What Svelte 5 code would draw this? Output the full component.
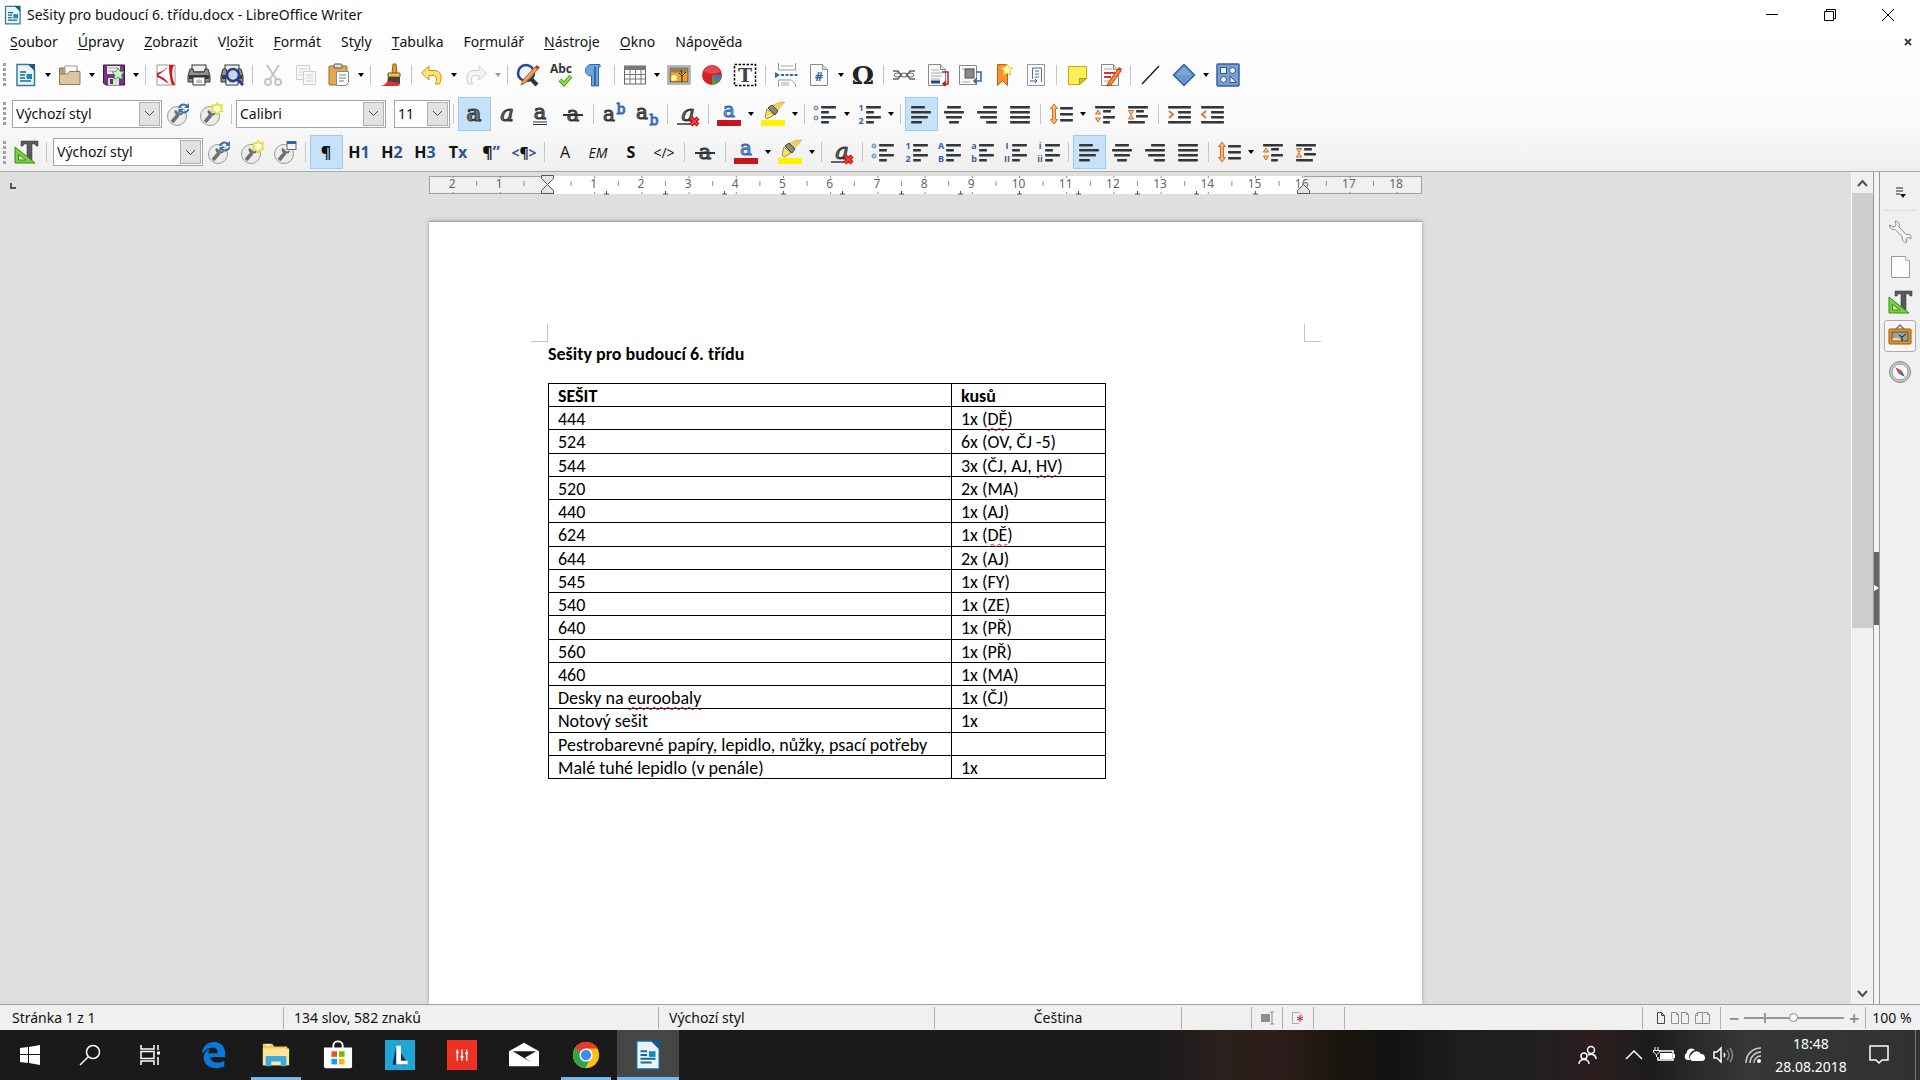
<script>
  const menus = [
    ['', 'S', 'oubor'], ['', 'Ú', 'pravy'], ['', 'Z', 'obrazit'], ['V', 'l', 'ožit'], ['', 'F', 'ormát'],
    ['St', 'y', 'ly'], ['', 'T', 'abulka'], ['Fo', 'r', 'mulář'], ['', 'N', 'ástroje'], ['', 'O', 'kno'], ['Nápo', 'v', 'ěda']
  ];

  const bar = (x, y, w) => `<rect x="${x}" y="${y - 1}" width="${w}" height="3" rx="1" fill="#8d8f8f"/><rect x="${x}" y="${y - 1}" width="${w}" height="2" rx="1" fill="#33363a"/>`;
  const bars = (list) => list.map(([x, y, w]) => bar(x, y, w)).join('');
  const listIcon = (a, b) => `<g font-family="Open Sans,sans-serif" font-weight="700" font-size="9" fill="#3a62a0" text-anchor="middle"><text x="4" y="9">${a}</text><text x="4" y="22">${b}</text></g>` + bars([[9, 5, 15], [9, 10, 8], [9, 15, 15], [9, 20, 8]]);
  const glyph = (t, extra = '', x = 12, size = 23, y = 19) => `<text x="${x}" y="${y}" text-anchor="middle" font-family="DejaVu Serif,serif" font-size="${size}" fill="#6d7070" stroke="#2e3436" stroke-width="1" ${extra}>${t}</text>`;
  const label = (t, extra = '', size = 16) => `<text x="12" y="18" text-anchor="middle" font-family="Open Sans,sans-serif" font-size="${size}" fill="#111" ${extra}>${t}</text>`;
  const blue = (t) => `<tspan fill="#2f5597">${t}</tspan>`;
  const disc = '<circle cx="11" cy="14" r="9.500" fill="#ececea" stroke="#9b9b98"/><path d="M6 20l6-7" stroke="#6b7073" stroke-width="3.500"/><path d="M9 8c-1.500 3 1 6 5 5.500 2 0 3-2 3-3l-3.500 1L11 9z" fill="#6b7073"/>';
  const star = '<path d="M18 1l1.500 2.500 3.500-.5-1 3.500 1.500 2.500-3.500 1-2 2.500-2-2.500-3.500-1 1.500-2.500-.5-3.500 3 .5z" fill="#fffde0" stroke="#ecd92e" stroke-width="1.500"/>';
  const page = '<path d="M3.500 1.500h12l5 5v16h-17z" fill="#fbfbfb" stroke="#888a85"/><path d="M15.500 1.500v5h5" fill="#ddd" stroke="#888a85"/>';
  const writer = '<path d="M3 1.500h12l5.500 5.500v15.500h-17.500z" fill="#e9f5fb" stroke="#3d7896" stroke-width="1.500"/><path d="M14 1h7v7z" fill="#18597f"/><path d="M6 9h6M6 12h5M6 15h5M6 18h11" stroke="#1b6a96" stroke-width="1.500"/><rect x="12.500" y="11" width="5.500" height="5" fill="#1b86b9"/>';
  const redX = '<path d="M15 16l7 7m0-7l-7 7" stroke="#a40000" stroke-width="4"/><path d="M15 16l7 7m0-7l-7 7" stroke="#ff3a3a" stroke-width="2"/>';
  const printer = '<rect x="5" y="2" width="14" height="7" fill="#eee" stroke="#333"/><path d="M3 6h3l1 3h10l1-3h3l2 7v6H1v-6z" fill="#8f9290" stroke="#2e3436"/><path d="M2 12h20v4H2z" fill="#3a3d3e"/><path d="M6 14h12v8H6z" fill="#fafafa" stroke="#333"/><path d="M9 18l3-2 3 2v2H9z" fill="#a6d3a0"/>';
  const pencil = '<path d="M10 20L20 6l3 2-10 14-4 1z" fill="#f58a2d" stroke="#b8480c"/><path d="M20 6l1-2 3 2-1 2z" fill="#d33"/>';
  const orangeArrow = '<path d="M5 2l3.500 4.500H6.500v11h2L5 22l-3.500-4.500h2v-11h-2z" fill="#f7b878" stroke="#d06f25"/>';
  const ruleT = '<path d="M7 1h17v5h-2l-1-2h-3v17h-5V4H10L9 6H7z" fill="#565b5e" stroke="#333" stroke-width=".5"/><path d="M1 7l20 16H1z" fill="#7ccf45" stroke="#3c8a0c"/><path d="M4.500 14.500l7.500 5.500H4.500z" fill="#d6f5bf" stroke="#3c8a0c"/>';
  const picture = '<rect x="1" y="3" width="22" height="18" fill="#f4f4f2" stroke="#777"/><rect x="3" y="5" width="18" height="14" fill="#f0a42b" stroke="#444"/><path d="M3.500 5.500h17v4h-17z" fill="#93805d"/><circle cx="7" cy="15" r="3" fill="#fff2a0"/><path d="M15 19v-6l-3-3m3 3l4-4m-4 2l-1-4" stroke="#2b1a0a" fill="none"/>';

  const icons = {
    writer,
    new: writer,
    open: '<path d="M1.500 5h7l2 2h9v14h-18z" fill="#b99e75" stroke="#8b6f45"/><path d="M7 3h12v14H7z" fill="#fafafa" stroke="#999"/><path d="M1.500 11h8l2-2.500h10.500v13h-20.500z" fill="#dcc7a3" stroke="#967b50"/>',
    save: '<path d="M1.500 2h21v20h-19l-2-2z" fill="#763485" stroke="#3e1448"/><rect x="5" y="3" width="13" height="8" fill="#f1e9f3"/><path d="M6 5h10M6 8h6" stroke="#aaa"/><rect x="6" y="15" width="11" height="7" fill="#ddd"/><rect x="8" y="16" width="3" height="5" fill="#444"/><path d="M16 5l2 3.500 4 .5-2.500 3 1 4-4.500-1.500-4 1.500 1-4-3-3 4-.5z" fill="#d2f2ce" stroke="#48a860"/>',
    pdf: '<path d="M3 2h18v20H3z" fill="#fff" stroke="#999"/><path d="M15 2h5c-3 5-2 14 1 20h-3c-2-5-3-13-3-20zM14 3c-1 3-5 6-10 9 5 2 9 5 11 9-3-2-8-6-12-7v-4c4-1 8-3 11-7z" fill="#d0151c"/>',
    print: printer,
    preview: printer + '<circle cx="13" cy="12" r="6" fill="#cfe4f8" fill-opacity=".9" stroke="#2a3f91" stroke-width="2.500"/><path d="M17 16l6 6" stroke="#2a3f91" stroke-width="3"/>',
    cut: '<g fill="none" stroke="#c4c6c6" stroke-width="2"><path d="M6 2l9 14M18 2L9 16"/><circle cx="7" cy="19" r="3"/><circle cx="17" cy="19" r="3"/></g>',
    copy: '<g fill="#f8f8f8" stroke="#cfcfcf"><path d="M2.500 2.500h13v14h-13z"/><path d="M5 6h8M5 9h8M5 12h5"/><path d="M9.500 8.500h12v13h-12z"/><path d="M12 12h7M12 15h7M12 18h7"/></g>',
    paste: '<rect x="2" y="3" width="18" height="19" rx="1" fill="#dfa955" stroke="#9d6c20"/><rect x="7" y="1" width="8" height="4" rx="1" fill="#ddd" stroke="#555"/><path d="M9.500 8.500h12v11l-3 3h-9z" fill="#fff" stroke="#888"/><path d="M12 12h7M12 15h7M12 18h5" stroke="#777"/>',
    brush: '<path d="M14 1h3l1 9h-5z" fill="#e8963c" stroke="#a55a10"/><path d="M9 10h12v4H9z" fill="#f0c050" stroke="#80591a"/><path d="M9 14h12v7H8z" fill="#4b4038"/><path d="M1 23c5 0 6-4 9-5l11 2c0 2-1 3-3 3z" fill="#d9333c"/>',
    undo: '<path d="M9 3v4.500h5c7 0 9 6 5.500 13.500h-4c2-5 1-8.500-2.500-8.500H9V17l-7.500-7z" fill="#fbe27b" stroke="#c5980a"/>',
    redo: '<path d="M15 3v4.500h-5c-7 0-9 6-5.500 13.500h4c-2-5-1-8.500 2.500-8.500h4V17l7.500-7z" fill="#f4f4f4" stroke="#d0d0d0"/>',
    find: '<circle cx="10" cy="10" r="8" fill="#e6f2fc" stroke="#24448f" stroke-width="2.500"/><path d="M15 16l6 6" stroke="#333" stroke-width="4"/><path d="M5 22l2-5L19 4l3 2L9 20z" fill="#f3a24b" stroke="#b35b12"/><path d="M19 4l2-2 3 3-2 1z" fill="#d22"/>',
    spell: '<text x="12" y="10" text-anchor="middle" font-family="Open Sans,sans-serif" font-weight="700" font-size="12" fill="#333">Abc</text><path d="M11 17l4 4 7-8" fill="none" stroke="#4c9a1d" stroke-width="4"/><path d="M11 17l4 4 7-8" fill="none" stroke="#8fe04e" stroke-width="2"/>',
    marks: '<path d="M18 1.500v2.500h-1.500v19h-3V4h-1v19h-3V13C1 13 2 2 9 1.500z" fill="#6aa5dc" stroke="#2d6ba8"/>',
    table: '<rect x="1.500" y="3" width="21" height="18" fill="#fff" stroke="#666"/><path d="M1 3h22v4H1z" fill="#777"/><path d="M2 11.500h20M2 16h20M7 7v14M12.500 7v14M18 7v14" stroke="#777" fill="none"/>',
    image: picture,
    chart: '<circle cx="12" cy="12" r="10" fill="#d5202a"/><path d="M12 12V22a10 10 0 0 0 7-3z" fill="#59983a"/><path d="M12 12l7 7a10 10 0 0 0 3-7z" fill="#4477bd"/><path d="M4 8a9 9 0 0 1 16 0 10 7 0 0 1-16 0z" fill="#fff" opacity=".2"/>',
    textbox: '<rect x="1.500" y="1.500" width="21" height="21" fill="#fff" stroke="#000" stroke-width="1.500" stroke-dasharray="2.500 1.500"/><text x="12" y="19" text-anchor="middle" font-family="DejaVu Serif,serif" font-weight="700" font-size="19" fill="#444">T</text>',
    pagebreak: '<path d="M4.500 0v7h17V0M4.500 24v-7h13l4 4v3" fill="#fff" stroke="#999"/><path d="M7 3h12M7 20h8M7 22h8" stroke="#aaa"/><path d="M1 9l5 3-5 3z" fill="#3465a4"/><path d="M7 12h17" stroke="#3465a4" stroke-width="2" stroke-dasharray="3 1.500"/>',
    field: page + '<text x="12" y="18" text-anchor="middle" font-family="Open Sans,sans-serif" font-weight="700" font-size="13" fill="#3465a4">#</text>',
    omega: '<text x="12" y="21" text-anchor="middle" font-family="DejaVu Serif,serif" font-weight="700" font-size="25" fill="#222">Ω</text>',
    link: '<g fill="none" stroke="#666"><path d="M1 8h5l3 4-3 4H1M23 8h-5l-3 4 3 4h5" stroke-width="1.500"/><ellipse cx="6" cy="12" rx="4" ry="2"/><ellipse cx="12" cy="12" rx="4" ry="2"/><ellipse cx="18" cy="12" rx="4" ry="2"/></g>',
    footnote: page + '<path d="M6 7h8M6 10h11M6 13h11M6 16h9" stroke="#aaa"/><path d="M6 19h9" stroke="#27467f" stroke-width="3"/><path d="M17 9h6v12h-4m2-3l-3 3 3 2" fill="none" stroke="#c01822" stroke-width="1.500"/>',
    endnote: '<path d="M1.500 2.500h17v19h-17z" fill="#fafafa" stroke="#888"/><path d="M4 6h12M4 19h8" stroke="#aaa"/><rect x="7" y="6" width="9" height="9" fill="#888" stroke="#555"/><path d="M18 9h5v9h-7m3-3l-3 3 3 3" fill="none" stroke="#3465a4" stroke-width="1.500"/>',
    bookmark: '<path d="M6.500 1.500h10v21l-5-5-5 5z" fill="#f5922c" stroke="#c3600c"/><path d="M16 1l2 3.500 4 .5-3 3 .5 4-3.500-2-3.500 2 .5-4-3-3 4-.5z" fill="#fff8b0" stroke="#e8ca20"/>',
    crossref: '<path d="M3.500 1.500h17v21h-17z" fill="#fafafa" stroke="#999"/><path d="M8.500 5h9v14M8.500 5v11M11 8h4M11 11h4M11 14h4" stroke="#4a73ab" fill="none"/><path d="M6 18h7m-2-2l2 2-2 2" stroke="#3465a4" fill="none"/>',
    note: '<path d="M3.500 3.500h18v12l-7 6h-11z" fill="#fcef58" stroke="#c8ab12"/><path d="M14.500 21.500v-6h7z" fill="#e1bd1f" stroke="#b89a10"/>',
    track: page + '<path d="M6 6h8M6 18h6" stroke="#aaa"/><path d="M6 10h11M6 14h7" stroke="#cc3b3b" stroke-width="2"/>' + pencil,
    line: '<path d="M3 21L20 3" stroke="#222" stroke-width="1.500"/>',
    diamond: '<path d="M12 1.500L22.500 12 12 22.500 1.500 12z" fill="#6796d2" stroke="#32619f" stroke-width="1.500"/><path d="M12 4l8 8H4z" fill="#fff" opacity=".15"/>',
    shapes: '<rect x="1" y="1" width="22" height="22" rx="1" fill="#779fd4" stroke="#365f9c" stroke-width="1.500"/><g fill="#e8f0fa" stroke="#2f5590"><path d="M4.500 4.500h6v6h-6z"/><circle cx="16.500" cy="7.500" r="3"/><circle cx="7.500" cy="16.500" r="3"/><path d="M14 13v6.500h6.500z"/></g>',
    refresh: disc + '<g fill="none" stroke="#3a6cb4" stroke-width="2"><path d="M13 6c1-3.500 5-4.500 8-2M22.500 7c-1 3.500-5 4.500-8 2"/></g><path d="M23 1v5h-5zM12.500 12V7h5z" fill="#3a6cb4"/>',
    newstyle: disc + star,
    stylewin: disc + '<rect x="14" y="1.500" width="9" height="8" fill="#f4f4f4" stroke="#667"/><path d="M14 2.500h9" stroke="#2f63ae" stroke-width="3"/>',
    bold: glyph('a', 'font-weight="700"'),
    italic: glyph('a', 'font-style="italic"'),
    underline: glyph('a', '', 12, 21, 17) + '<path d="M5 20h14M5 22.500h14" stroke="#2e3436"/>',
    strike: glyph('a', '', 12, 21) + '<path d="M2 13h20" stroke="#2e3436" stroke-width="2"/>',
    sup: glyph('a', '', 7, 20) + '<text x="19" y="12" text-anchor="middle" font-family="DejaVu Serif,serif" font-size="14" fill="#8ab4e6" stroke="#2f63ae">b</text>',
    sub: glyph('a', '', 7, 20, 17) + '<text x="19" y="23" text-anchor="middle" font-family="DejaVu Serif,serif" font-size="14" fill="#8ab4e6" stroke="#2f63ae">b</text>',
    clear: glyph('a', 'font-style="italic"') + '<path d="M1 22h14" stroke="#2e3436" stroke-width="1.500"/>' + redX,
    fontcolor: '<text x="12" y="15" text-anchor="middle" font-family="DejaVu Serif,serif" font-size="20" fill="#8ab4e6" stroke="#2f63ae">a</text><rect y="18" width="24" height="6" fill="#c9141c"/>',
    highlight: '<rect y="18" width="24" height="6" fill="#fff200"/><path d="M4 15l2-8 7 6-7 4z" fill="#f7e16a" stroke="#a88a1c"/><path d="M7 6l4-3 6 6-3 4z" fill="#8c8c78" stroke="#444"/><path d="M12 3l7-3h5l-7 8z" fill="#ecd25a" stroke="#b8a040" stroke-width=".5"/>',
    bullets: '<g fill="#b5d0f0" stroke="#5b86bd"><circle cx="3" cy="6" r="2"/><circle cx="3" cy="16" r="2"/></g>' + bars([[8, 5, 15], [8, 10, 8], [8, 15, 15], [8, 20, 8]]),
    n12: listIcon('1', '2'), nAB: listIcon('A', 'B'), nab: listIcon('a', 'b'), nI: listIcon('I', 'II'), ni: listIcon('i', 'ii'),
    left: bars([[2, 5, 14], [2, 10, 20], [2, 15, 17], [2, 20, 11]]),
    center: bars([[5, 5, 14], [2, 10, 20], [4, 15, 16], [7, 20, 10]]),
    right: bars([[8, 5, 14], [2, 10, 20], [5, 15, 17], [11, 20, 11]]),
    justify: bars([[2, 5, 20], [2, 10, 20], [2, 15, 20], [2, 20, 20]]),
    spacing: orangeArrow + bars([[11, 6, 13], [11, 12, 13], [11, 18, 13]]),
    more: bars([[2, 5, 20], [10, 9, 8], [10, 15, 12], [10, 20, 7]]) + '<path d="M5 8l2.500 4h-5zM5 20l2.500-4h-5z" fill="#fbd0a0" stroke="#d4691a"/>',
    less: bars([[2, 5, 20], [10, 9, 8], [10, 14, 12], [2, 20, 17]]) + '<path d="M5 12.500l2.500-4h-5zM5 13l2.500 4h-5z" fill="#fbd0a0" stroke="#d4691a"/>',
    indent: bars([[1, 5, 23], [11, 10, 13], [11, 15, 13], [1, 20, 23]]) + '<path d="M2 9l4 3.500L2 16" stroke="#d98038" stroke-width="2" fill="none"/>',
    outdent: bars([[1, 5, 23], [11, 10, 13], [11, 15, 13], [1, 20, 23]]) + '<path d="M6 9l-4 3.500L6 16" stroke="#d98038" stroke-width="2" fill="none"/>',
    ruleT,
    para: label('¶', 'font-weight="700"'),
    h1: label('H' + blue('1'), 'font-weight="700"'),
    h2: label('H' + blue('2'), 'font-weight="700"'),
    h3: label('H' + blue('3'), 'font-weight="700"'),
    tx: label('T' + blue('x'), 'font-weight="700"'),
    quote: label('¶' + blue('”'), 'font-weight="700"'),
    pre: label(blue('&lt;') + '¶' + blue('&gt;'), 'font-weight="700"', 14),
    A: label('A'),
    em: label('EM', 'font-style="italic"', 14),
    S: label('S', 'font-weight="700"'),
    code: label('&lt;/&gt;', '', 14),
    settings: '<path d="M8 8h7M8 11h7M8 14h4" stroke="#223"/><path d="M12 14h6l-3 4z" fill="#112"/>',
    wrench: '<path d="M1.500 5l4 2 2.500-1.500L7.500 1c3 0 4.500 3 3.500 6l7 7.500c3-1 5.500.5 5 4l-3-1-2 1.500.5 3.500c-3.500 0-5-3-4-5.500L7 9.500C4 10 1.500 8 1.500 5z" fill="#f4f4f4" stroke="#888"/>',
    blank: '<path d="M3.500 1.500h14l4 4v17h-18z" fill="#fcfcfc" stroke="#999"/><path d="M17.500 1.500v4h4" fill="#eee" stroke="#bbb"/>',
    gallery: '<path d="M8 5l4-4 4 4" fill="none" stroke="#777" stroke-width="1.500"/><rect x="1" y="5" width="22" height="15" rx="1" fill="#e8952a" stroke="#96540a"/><rect x="4" y="8" width="16" height="9" fill="#89a5b4" stroke="#7a4a10"/><path d="M4.500 16.500v-2l5-1 4 3z" fill="#fbd77a"/><path d="M14 17v-4l-3-2m3 2l4-3" stroke="#2b1a0a" fill="none"/>',
    compass: '<circle cx="12" cy="12" r="10.500" fill="#c7cbce" stroke="#888"/><circle cx="12" cy="12" r="8" fill="#f8f8f8" stroke="#999"/><path d="M7 7l7 4-3 3z" fill="#d83a3a"/><path d="M17 17l-6-3 3-3z" fill="#4c69a0"/>'
  };

  const A = { arrow: true }, G = { arrow: true, dim: true }, SEP = { sep: true };
  const b = (icon, title, on = false) => ({ icon, title, on });
  const combo = (title, value, small = false) => ({ combo: title, value, small });

  const aligns = [b('left', 'Zarovnat vlevo', true), b('center', 'Zarovnat na střed'), b('right', 'Zarovnat vpravo'), b('justify', 'Do bloku')];
  const toolbars = [
    [b('new', 'Nový'), A, b('open', 'Otevřít'), A, b('save', 'Uložit'), A, SEP, b('pdf', 'Exportovat do PDF'), b('print', 'Tisk'), b('preview', 'Náhled tisku'), SEP,
      b('cut', 'Vyjmout'), b('copy', 'Kopírovat'), b('paste', 'Vložit'), A, SEP, b('brush', 'Klonovat formátování'), SEP, b('undo', 'Zpět'), A, b('redo', 'Znovu'), G, SEP,
      b('find', 'Najít a nahradit'), b('spell', 'Pravopis'), b('marks', 'Formátovací značky'), SEP, b('table', 'Tabulka'), A, b('image', 'Obrázek'), b('chart', 'Graf'), b('textbox', 'Textové pole'), SEP,
      b('pagebreak', 'Konec stránky'), b('field', 'Pole'), A, b('omega', 'Speciální znak'), SEP, b('link', 'Odkaz'), b('footnote', 'Poznámka pod čarou'), b('endnote', 'Vysvětlivka'), b('bookmark', 'Záložka'), b('crossref', 'Křížový odkaz'), SEP,
      b('note', 'Komentář'), b('track', 'Sledovat změny'), SEP, b('line', 'Čára'), b('diamond', 'Základní tvary'), A, b('shapes', 'Funkce kreslení')],
    [combo('Styl odstavce', 'Výchozí styl'), b('refresh', 'Aktualizovat styl'), b('newstyle', 'Nový styl'), SEP, combo('Název písma', 'Calibri'), { gap: true }, combo('Velikost písma', '11', true), SEP,
      b('bold', 'Tučné', true), b('italic', 'Kurzíva'), b('underline', 'Podtržené'), b('strike', 'Přeškrtnuté'), SEP, b('sup', 'Horní index'), b('sub', 'Dolní index'), SEP, b('clear', 'Vymazat formátování'), SEP,
      b('fontcolor', 'Barva písma'), A, b('highlight', 'Zvýraznění'), A, SEP, b('bullets', 'Odrážky'), A, b('n12', 'Číslování'), A, SEP, ...aligns, SEP,
      b('spacing', 'Řádkování'), A, b('more', 'Zvětšit mezery'), b('less', 'Zmenšit mezery'), SEP, b('indent', 'Zvětšit odsazení'), b('outdent', 'Zmenšit odsazení')],
    [b('ruleT', 'Styly a formátování'), SEP, combo('Použít styl', 'Výchozí styl'), b('refresh', 'Aktualizovat styl'), b('newstyle', 'Nový styl'), b('stylewin', 'Upravit styl'), SEP,
      b('para', 'Výchozí odstavec', true), b('h1', 'Nadpis 1'), b('h2', 'Nadpis 2'), b('h3', 'Nadpis 3'), b('tx', 'Tělo textu'), b('quote', 'Citace'), b('pre', 'Předformátovaný text'), SEP,
      b('A', 'Výchozí znak'), b('em', 'Důraz'), b('S', 'Silný důraz'), b('code', 'Zdrojový text'), SEP, b('strike', 'Přeškrtnuté'), SEP, b('fontcolor', 'Barva písma'), A, b('highlight', 'Zvýraznění'), A, SEP, b('clear', 'Vymazat formátování'), SEP,
      b('bullets', 'Odrážky'), b('n12', 'Číslování 1 2'), b('nAB', 'Číslování A B'), b('nab', 'Číslování a b'), b('nI', 'Číslování I II'), b('ni', 'Číslování i ii'), SEP, ...aligns, SEP,
      b('spacing', 'Řádkování'), A, b('more', 'Zvětšit mezery'), b('less', 'Zmenšit mezery')]
  ];

  // Each cell is a list of text runs; a run in an array is marked by the spell checker.
  const rows = [
    [['444'], ['1x (', ['DĚ'], ')']],
    [['524'], ['6x (OV, ČJ -5)']],
    [['544'], ['3x (ČJ, AJ, ', ['HV'], ')']],
    [['520'], ['2x (MA)']],
    [['440'], ['1x (AJ)']],
    [['624'], ['1x (', ['DĚ'], ')']],
    [['644'], ['2x (AJ)']],
    [['545'], ['1x (FY)']],
    [['540'], ['1x (ZE)']],
    [['640'], ['1x (PŘ)']],
    [['560'], ['1x (PŘ)']],
    [['460'], ['1x (MA)']],
    [['Desky na ', ['euroobaly']], ['1x (ČJ)']],
    [['Notový sešit'], ['1x']],
    [['Pestrobarevné papíry, lepidlo, nůžky, psací potřeby'], []],
    [['Malé tuhé lepidlo (v penále)'], ['1x']]
  ];

  const cm = 47.2, zero = 118.5;
  const numbers = Array.from({ length: 21 }, (_, i) => i - 2).filter((n) => n !== 0);
  const halves = Array.from({ length: 20 }, (_, i) => i - 1.5);
  const tabs = Array.from({ length: 12 }, (_, i) => (i + 1) * 1.25);

  const side = [['settings', 'Nastavení postranní lišty'], ['wrench', 'Vlastnosti'], ['blank', 'Stránka'], ['ruleT', 'Styly a formátování'], ['gallery', 'Galerie'], ['compass', 'Navigátor']];

  const apps = [
    ['edge', 'Microsoft Edge', ''], ['explorer', 'Průzkumník souborů', 'multi'], ['store', 'Microsoft Store', ''], ['lapp', 'L', ''],
    ['mixer', 'Mixážní pult', ''], ['mail', 'Pošta', ''], ['chrome', 'Google Chrome', 'open'], ['writer', 'LibreOffice Writer', 'current']
  ];
  const appIcons = {
    edge: '<path d="M3 15C4 6 9 2 16 2c8 0 12 6 12 12v4H12c0 4 4 6 8 6 3 0 5-1 7-2v6c-2 1-5 2-9 2-8 0-13-5-13-11 0-5 3-8 7-10-1 1-2 3-2 5h10c0-4-2-6-5-6-5 0-9 3-12 7z" fill="#0a78d6"/>',
    explorer: '<path d="M2 4h10l2 3h14v20H2z" fill="#f3c84b"/><path d="M2 9h28v18H2z" fill="#fde69a"/><path d="M5 28V17h22v11h-6v-5H11v5z" fill="#3fa9e0"/><path d="M5 5h5" stroke="#fff" stroke-width="1.500"/>',
    store: '<path d="M11 9V6c0-6 10-6 10 0v3" fill="none" stroke="#fff" stroke-width="2"/><path d="M1 8h30v20a2 2 0 0 1-2 2H3a2 2 0 0 1-2-2z" fill="#fff"/><path d="M9 12h6v6H9z" fill="#f25022"/><path d="M17 12h6v6h-6z" fill="#7fba00"/><path d="M9 20h6v6H9z" fill="#00a4ef"/><path d="M17 20h6v6h-6z" fill="#ffb900"/>',
    lapp: '<rect x="0" y="0" width="32" height="32" fill="#1fa6d9"/><path d="M12 6L8 26l15 1v-4z" fill="#0b3550"/><path d="M12 6h5v16h7v4H12z" fill="#fff"/>',
    mixer: '<rect x="0" y="0" width="32" height="32" fill="#ee3124"/><path d="M11 10v12M16 10v12M21 10v12" stroke="#fff" stroke-width="1.500"/><path d="M9.500 13h3M14.500 18h3M19.500 14h3" stroke="#fff" stroke-width="2"/>',
    mail: '<path d="M0 12L16 3l16 9v16H0z" fill="#fff"/><path d="M4 12h25L17 19l7 5z" fill="#1a1a1a"/>',
    chrome: '<circle cx="16" cy="16" r="14" fill="#fbc116"/><path d="M16 16L4 9a14 14 0 0 1 24.500 0H16z" fill="#e33b2e"/><path d="M4 9a14 14 0 0 0 11 21l6-10.500-5-3.500z" fill="#31a350"/><circle cx="16" cy="16" r="7" fill="#fff"/><circle cx="16" cy="16" r="5.500" fill="#4688f1"/>',
    writer: '<path d="M4 1h16l8 8v22H4z" fill="#e9f5fb" stroke="#0f6a97" stroke-width="1.500"/><path d="M19 0h10v10z" fill="#18597f"/><path d="M8 12h7M8 16h7M8 20h16M8 24h12" stroke="#1b6a96" stroke-width="2"/><rect x="17" y="12" width="7" height="6" fill="#1b86b9"/>'
  };
  const tray = [
    ['chevron', 'Zobrazit skryté ikony', '<path d="M4 16l8-8 8 8" fill="none" stroke="#fff" stroke-width="1.500"/>'],
    ['battery', 'Baterie', '<path d="M8 8h13v9H6v-3" fill="none" stroke="#fff" stroke-width="1.500"/><rect x="8" y="10" width="12" height="6" fill="#fff"/><path d="M22 11v4" stroke="#fff" stroke-width="2"/><path d="M3 4v3M6 4v3M1.500 7.500h6V9l-3 3-3-3zM4.500 12v2" stroke="#fff" fill="none"/>'],
    ['cloud', 'OneDrive', '<path d="M8 17H5a4 4 0 0 1-.5-7A5 5 0 0 1 13 7c-4 1-5 4-6 6z" fill="#fff"/><path d="M10 18a4 4 0 0 1 0-7 5 5 0 0 1 9 0c3 0 4 2 4 4s-1 3-3 3z" fill="#fff"/>'],
    ['volume', 'Hlasitost', '<path d="M2 9h3l4-4v14l-4-4H2z" fill="none" stroke="#fff" stroke-width="1.500"/><path d="M12 10q1.500 2 0 4" stroke="#fff" fill="none" stroke-width="1.500"/><path d="M15 7q4 5 0 10M18 5q5 7 0 14" stroke="#888" fill="none" stroke-width="1.500"/>'],
    ['wifi', 'Wi-Fi', '<g fill="none" stroke="#ccc"><path d="M4 20C4 11 11 5 19 5M8 20c0-6 5-11 11-11M12 20c0-4 3-7 7-7" stroke-width="1.500"/></g><circle cx="17" cy="18" r="2" fill="#fff"/>']
  ];
</script>

{#snippet svg(body, size = 24)}
  <svg width={size} height={size} viewBox="0 0 {size} {size}" aria-hidden="true">{@html body}</svg>
{/snippet}

{#snippet cell(runs)}
  <td>{#each runs as run}{#if Array.isArray(run)}<span class="bad">{run[0]}</span>{:else}{run}{/if}{/each}</td>
{/snippet}

<div class="app">
  <header>
    <div class="title">
      {@render svg(icons.writer)}
      <h1>Sešity pro budoucí 6. třídu.docx - LibreOffice Writer</h1>
      <div class="controls">
        <button aria-label="Minimalizovat"><svg width="12" height="12"><path d="M0 5.500h12" /></svg></button>
        <button aria-label="Obnovit"><svg width="12" height="12"><path d="M.5 2.500h9v9h-9zM2.500 2.500v-2h9v9h-2" /></svg></button>
        <button aria-label="Zavřít"><svg width="12" height="12"><path d="M0 0l12 12M12 0L0 12" /></svg></button>
      </div>
    </div>
    <nav class="menu">
      {#each menus as [pre, key, post]}
        <button>{pre}<u>{key}</u>{post}</button>
      {/each}
      <button class="closedoc" aria-label="Zavřít dokument"><svg width="8" height="8"><path d="M1 1l6 6M7 1L1 7" /></svg></button>
    </nav>
    {#each toolbars as items}
      <div class="toolbar" role="toolbar">
        <span class="handle"></span>
        {#each items as it}
          {#if it.sep}<span class="sep"></span>
          {:else if it.gap}<span class="gap"></span>
          {:else if it.arrow}<button class="arrow" class:dim={it.dim} aria-label="Další možnosti"></button>
          {:else if it.combo}
            <label class="combo" class:small={it.small} class:flush={it.small || it.value === 'Calibri'}>
              <select aria-label={it.combo}><option>{it.value}</option></select>
              <span><svg width="11" height="7"><path d="M1 1l4.500 4.500L10 1" /></svg></span>
            </label>
          {:else}
            <button class="tool" class:on={it.on} title={it.title} aria-label={it.title}>{@render svg(icons[it.icon])}</button>
          {/if}
        {/each}
      </div>
    {/each}
  </header>

  <main>
    <section class="work">
      <div class="rulerrow">
        <button class="tabtype" aria-label="Typ tabulátoru"></button>
        <svg class="ruler" width="993" height="20" viewBox="0 0 993 20">
          <rect x=".5" y="1.500" width="992" height="17" fill="#f0f0f0" stroke="#a0a0a0" />
          <rect x="118" y="1" width="757" height="18" fill="#fff" />
          {#each halves as n}<path d="M{zero + n * cm} 6v5" stroke="#8a8a8a" />{/each}
          {#each numbers as n}
            <path d="M{zero + n * cm} 1v2M{zero + n * cm} 17v2" stroke="#8a8a8a" />
            <text x={zero - 1 + n * cm} y="13" text-anchor="middle">{Math.abs(n)}</text>
          {/each}
          {#each tabs as n}<path d="M{zero + n * cm} 16v3m-2.500 0h5" stroke="#555" />{/each}
          <path d="M112.500.5h12v3l-6 6 6 6v3h-12v-3l6-6-6-6z" fill="#e4e4e4" stroke="#555" />
          <path d="M868.500 18.500v-3l6-6 6 6v3z" fill="#e4e4e4" stroke="#555" />
        </svg>
      </div>
      <article>
        <div class="corners"><span class="tl"></span><span class="tr"></span></div>
        <h2>Sešity pro budoucí 6. třídu</h2>
        <table>
          <thead><tr><th>SEŠIT</th><th>kusů</th></tr></thead>
          <tbody>
            {#each rows as [name, count]}
              <tr>{@render cell(name)}{@render cell(count)}</tr>
            {/each}
          </tbody>
        </table>
      </article>
    </section>
    <div class="scroll">
      <button aria-label="Nahoru"><svg width="11" height="8"><path d="M1 7l4.500-5L10 7" /></svg></button>
      <div class="track"><div class="thumb"></div></div>
      <button aria-label="Dolů"><svg width="11" height="8"><path d="M1 1l4.500 5L10 1" /></svg></button>
    </div>
    <div class="splitter"><button aria-label="Skrýt postranní lištu"></button></div>
    <aside>
      {#each side as [icon, title]}
        <button class={icon} {title} aria-label={title}>{@render svg(icons[icon])}</button>
      {/each}
    </aside>
  </main>

  <footer class="status">
    <span class="s-page">Stránka 1 z 1</span>
    <span class="s-words">134 slov, 582 znaků</span>
    <span class="s-style">Výchozí styl</span>
    <span class="s-lang">Čeština</span>
    <span class="s-insert"></span>
    <span class="s-cell"><svg width="13" height="14"><path d="M0 3h9v8H0z" fill="#8d8d8d" /><path d="M9 1h4M9 13h4M11 1v12" stroke="#8d8d8d" /></svg></span>
    <span class="s-cell"><svg width="12" height="14"><path d="M7 12.500H.5v-11h7l2 2V5" fill="none" stroke="#aaa" /><path d="M8 4v7M5 6l6 3M11 6L5 9" stroke="#c8102e" /></svg></span>
    <span class="s-cell"></span>
    <span class="s-fill"></span>
    <span class="s-views">
      <svg width="54" height="12" fill="none" stroke="#909090"><path d="M.5.5h4l3 3v8h-7zM4.500.5v3h3" stroke="#444" /><path d="M14.500.5h5l2 2v9h-7zM24.500.5h5l2 2v9h-7zM19.500.5v2h2M29.500.5v2h2M40.500.5h5v11h-7v-9zM45.500.5h5l2 2v9h-7M50.500.5v2h2M40.500.5v3h-2" /></svg>
    </span>
    <span class="s-zoom">
      <b>−</b><input type="range" min="0" max="100" value="49" aria-label="Měřítko" /><b>+</b>
    </span>
    <span class="s-pct">100 %</span>
  </footer>

  <footer class="taskbar">
    <button class="sys" aria-label="Start"><svg width="20" height="20" fill="#fff"><path d="M0 3l8-1v7H0zM9 2l11-2v9H9zM0 10h8v8l-8-1zM9 10h11v10L9 18z" /></svg></button>
    <button class="sys" aria-label="Hledat"><svg width="22" height="22" fill="none" stroke="#fff" stroke-width="1.500"><circle cx="14" cy="8" r="6.500" /><path d="M9 13l-8 8" /></svg></button>
    <button class="sys" aria-label="Zobrazení úkolů"><svg width="22" height="20" fill="none" stroke="#fff" stroke-width="1.500"><path d="M2 0v4h13V0M2 20v-4h13v4M2 6.500h13v7H2zM19 0v5M19 12v8" /><path d="M18 8h3" stroke-width="3" /></svg></button>
    <div class="apps">
      {#each apps as [id, title, state]}
        <button class="appbtn {state}" {title} aria-label={title}>{@render svg(appIcons[id], 32)}</button>
      {/each}
    </div>
    <div class="tray">
      <button class="people" aria-label="Lidé"><svg width="20" height="20" fill="none" stroke="#fff" stroke-width="1.500"><circle cx="13" cy="5" r="3.500" /><circle cx="6" cy="11" r="3" /><path d="M1 19c0-6 10-6 10 0M10 10c4-2 8 0 8 4" /></svg></button>
      {#each tray as [id, title, body]}
        <button class="t-{id}" aria-label={title}>{@render svg(body)}</button>
      {/each}
      <button class="clock"><span>18:48</span><span>28.08.2018</span></button>
      <button class="notif" aria-label="Oznámení"><svg width="20" height="20" fill="none" stroke="#fff" stroke-width="1.500"><path d="M1 1h18v14h-6l-3 3-3-3H1z" /></svg></button>
      <button class="desk" aria-label="Zobrazit plochu"></button>
    </div>
  </footer>
</div>

<style>
  :global(body) { margin: 0; }
  .app { display: flex; flex-direction: column; height: 100vh; min-width: 1400px; overflow: hidden; font: 14px/20px "Noto Sans", "Open Sans", sans-serif; color: #111; background: #f0f0f0; }
  button { border: 0; padding: 0; margin: 0; background: none; font: inherit; color: inherit; display: flex; align-items: center; justify-content: center; flex: none; }
  svg { display: block; flex: none; overflow: visible; }
  header { flex: none; background: linear-gradient(#fff 20%, #fafafa 70%, #efefef); border-bottom: 1px solid #a8a8a8; }
  .title { display: flex; align-items: center; height: 29px; gap: 4px; background: #fff; }
  .title > :global(svg) { width: 20px; height: 22px; margin-left: 3px; }
  h1 { margin: 0; font: inherit; flex: 1; }
  .controls { display: flex; margin-right: 3px; }
  .controls button { width: 58px; height: 28px; }
  .controls path { fill: none; stroke: #000; }
  .menu { display: flex; height: 26px; }
  .menu button { padding: 0 10px; }
  .menu u { text-underline-offset: 2px; }
  .menu .closedoc { margin-left: auto; padding: 0 8px; }
  .closedoc path { stroke: #444; stroke-width: 2; }
  .toolbar { display: flex; align-items: center; height: 39px; }
  .toolbar:last-child { height: 38px; }
  .handle { width: 3px; height: 23px; margin: 0 4px 0 3px; flex: none; background: repeating-linear-gradient(#a0a0a0 0 3px, transparent 3px 5px); }
  .sep { width: 1px; height: 20px; margin: 0 4px 0 3px; background: #c6c6c6; flex: none; }
  .gap { width: 8px; }
  .tool { width: 33px; height: 34px; padding-right: 1px; box-sizing: border-box; }
  .tool.on { background: #c5e2fa; border: 1px solid #99cdf5; }
  .arrow { width: 11px; height: 34px; padding-right: 2px; box-sizing: border-box; }
  .arrow::before { content: ""; border: 3px solid transparent; border-top: 4px solid #000; border-bottom: 0; }
  .arrow.dim::before { border-top-color: #999; }
  .combo { display: grid; width: 150px; height: 28px; margin-left: 2px; box-sizing: border-box; border: 1px solid #a5a5a5; background: #fff; flex: none; }
  .combo.flush { margin-left: 0; }
  .combo.small { width: 56px; }
  .combo select { grid-area: 1 / 1; appearance: none; border: 0; padding: 0 22px 0 3px; background: none; font: inherit; color: inherit; min-width: 0; }
  .combo span { grid-area: 1 / 1; justify-self: end; width: 19px; margin: 1px; border: 1px solid #b0b0b0; background: #e2e2e2; display: flex; align-items: center; justify-content: center; pointer-events: none; }
  .combo path { fill: none; stroke: #444; }

  main { flex: 1; display: flex; min-height: 0; }
  .work { flex: 1; background: #dfdfdd; display: flex; flex-direction: column; overflow: hidden; }
  .rulerrow { display: grid; grid-template-columns: 1fr auto 1fr; padding-top: 3px; }
  .tabtype { width: 4px; height: 4px; margin: 8px 0 0 10px; border: solid #555; border-width: 0 0 2px 2px; box-sizing: content-box; }
  .ruler text { font-size: 12px; fill: #666; }
  article { flex: 1 0 auto; align-self: center; width: 993px; margin-top: 26px; background: #fff; border-top: 1px solid #aaa; box-shadow: 0 0 4px #999; font: 18px/22px Carlito, Lato, sans-serif; color: #000; }
  .corners { display: flex; justify-content: space-between; padding: 102px 101px 0 102px; }
  .corners span { width: 16px; height: 17px; border-bottom: 1px solid #c4c4c4; }
  .tl { border-right: 1px solid #c4c4c4; }
  .tr { border-left: 1px solid #c4c4c4; }
  h2 { margin: 0 0 17px 119px; font: inherit; font-weight: 700; line-height: 24px; }
  table { margin-left: 119px; width: 558px; height: 396px; border-collapse: collapse; table-layout: fixed; }
  th, td { border: 1px solid #000; padding: 2px 0 0 9px; line-height: 20px; text-align: left; white-space: nowrap; }
  th:first-child { width: 393px; }
  .bad { text-decoration: underline wavy #c8202c 1px; text-underline-offset: 2px; }

  .scroll { width: 21px; display: flex; flex-direction: column; border-left: 1px solid #fff; background: #f0f0f0; }
  .scroll button { height: 21px; }
  .scroll path { fill: none; stroke: #505050; stroke-width: 2; }
  .track { flex: 1; }
  .thumb { height: 55%; background: #cdcdcd; }
  .splitter { width: 5px; display: flex; align-items: center; border: solid #999; border-width: 0 1px; background: #f4f4f4; }
  .splitter button { width: 5px; height: 73px; background: #666; }
  .splitter button::before { content: ""; border: 3px solid transparent; border-left: 5px solid #fff; border-right: 0; }
  aside { width: 40px; padding-top: 1px; display: flex; flex-direction: column; align-items: center; background: #f0f0f0; }
  aside button { width: 32px; height: 35px; padding-right: 1px; box-sizing: border-box; }
  aside .settings { height: 38px; border-bottom: 1px solid #ddd; margin-bottom: 3px; }
  aside .gallery { height: 32px; margin: 1px 0 2px; border: 1px solid #b9a9a5; border-radius: 3px; background: #f6f6f6; }

  .status { flex: none; display: flex; height: 26px; box-sizing: border-box; border-top: 1px solid #a0a0a0; background: #f0f0f0; align-items: center; }
  .status > span { height: 22px; box-sizing: border-box; border-right: 1px solid #b0b0b0; display: flex; align-items: center; justify-content: center; flex: none; }
  .status .s-page { width: 284px; padding-left: 12px; justify-content: flex-start; }
  .status .s-words { width: 375px; padding-left: 10px; justify-content: flex-start; }
  .status .s-style { width: 276px; padding-left: 10px; justify-content: flex-start; }
  .status .s-lang { width: 247px; }
  .status .s-insert { width: 70px; }
  .status .s-cell { width: 31px; }
  .status .s-fill { flex: 1; }
  .status .s-views { width: 78px; padding-left: 4px; }
  .status .s-zoom { width: 145px; padding-left: 2px; gap: 5px; color: #8a8a8a; }
  .status .s-pct { width: 54px; padding-right: 2px; border: 0; }
  .s-zoom b { font-size: 18px; font-weight: 600; }
  .s-zoom input { appearance: none; width: 100px; height: 10px; margin: 0; background: linear-gradient(90deg, transparent 20px, #999 20px 22px, transparent 22px), linear-gradient(transparent 4px, #999 4px 6px, transparent 6px); }
  .s-zoom input::-webkit-slider-thumb { appearance: none; width: 9px; height: 9px; border: 1px solid #888; border-radius: 50%; background: #fff; box-sizing: border-box; }

  .taskbar { flex: none; display: flex; height: 50px; color: #fff; background: linear-gradient(90deg, #1a1a1a 0 60%, #2b201d 64%, #2b1c1a 67%, #19140f 70%, #131313 73%, #1c1f1e 76%, #201f1f 80%, #2c1d1e 83%, #1c1c1d 86%, #363837 91%, #303131); }
  .sys { width: 60px; height: 50px; }
  .apps { display: flex; margin-left: 3px; flex: 1; }
  .appbtn { width: 62px; height: 50px; border-bottom: 3px solid transparent; padding-top: 3px; box-sizing: border-box; }
  .appbtn :global(svg) { width: 30px; height: 30px; }
  .appbtn.open, .appbtn.multi { margin: 0 6px; width: 50px; border-color: #76b9ed; }
  .appbtn.current { background: #464646; border-color: #76b9ed; }
  .tray { display: flex; }
  .tray button { width: 30px; }
  .tray .people { margin-right: 16px; }
  .tray .clock { width: 76px; margin-left: 4px; flex-direction: column; line-height: 23px; }
  .tray .notif { width: 60px; margin-right: 6px; }
  .tray .desk { width: 5px; border-left: 1px solid #777; }
</style>
